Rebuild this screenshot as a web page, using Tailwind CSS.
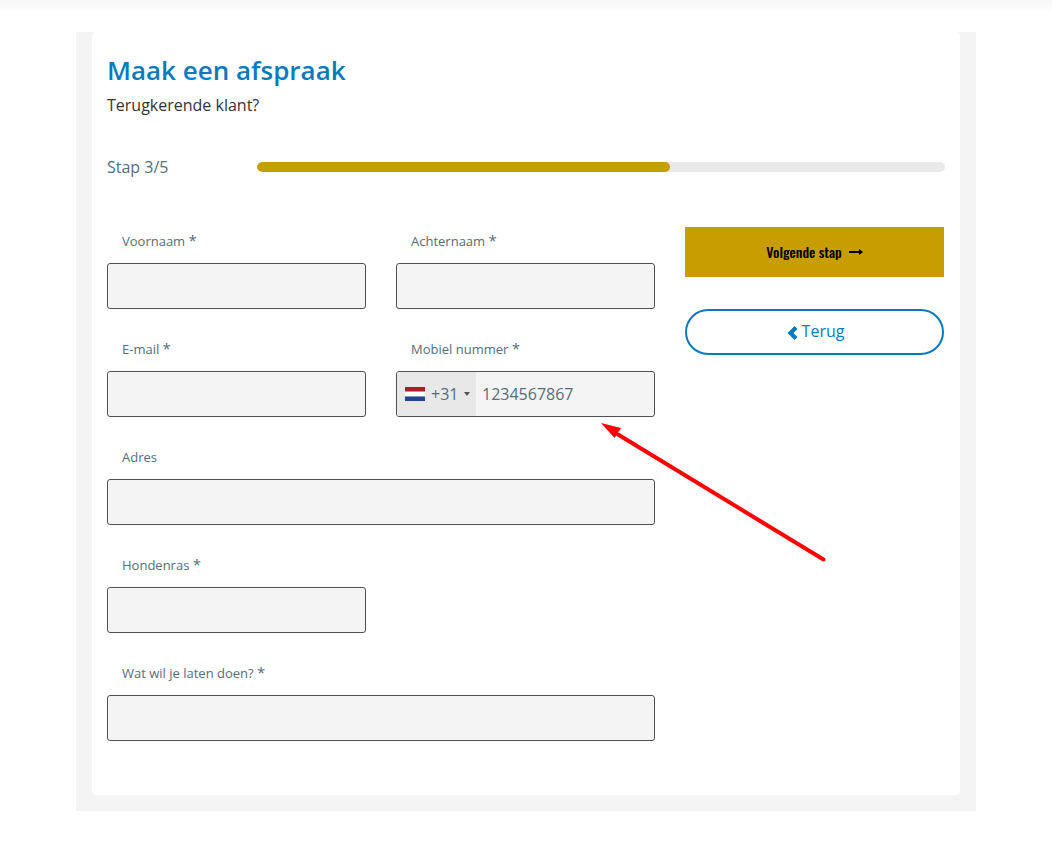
<!DOCTYPE html>
<html lang="nl">
<head>
<meta charset="utf-8">
<meta name="viewport" content="width=device-width, initial-scale=1">
<title>Maak een afspraak</title>
<script src="https://cdn.jsdelivr.net/npm/@tailwindcss/browser@4"></script>
</head>
<body class="bg-white font-['Open_Sans',sans-serif] text-base text-[#546E7A]">
<div class="h-3 bg-linear-to-b from-[#f7f7f7] to-white"></div>
<main class="mx-auto mt-5 max-w-[900px] bg-[#f4f4f4] px-4 pb-4">
  <form class="relative rounded bg-white px-[15px] pt-5 pb-[54px]">
    <h1 class="text-[26px] leading-9 font-semibold text-[#0a7abf]">Maak een afspraak</h1>
    <p class="mt-[5px] leading-6 text-[#333333]">Terugkerende klant?</p>

    <div class="mt-[38px] flex items-center">
      <span class="w-[150px] shrink-0 leading-6" id="step">Stap 3/5</span>
      <div class="h-[10px] grow overflow-hidden rounded-full bg-[#e9e9e9]" role="progressbar" aria-labelledby="step" aria-valuemin="0" aria-valuemax="5" aria-valuenow="3">
        <div class="h-full rounded-full bg-[#c89d00]" style="width:60%"></div>
      </div>
    </div>

    <div class="mt-12 mr-px grid grid-cols-3 gap-x-[30px]">
      <div class="col-span-2 grid grid-cols-2 gap-x-[30px] gap-y-[26px]">
        <div>
          <label for="voornaam" class="block h-7 pl-[15px] text-[13px] leading-7">Voornaam <span class="text-[15px] leading-none">*</span></label>
          <input id="voornaam" type="text" class="mt-2 block h-[46px] w-full rounded-[3px] border border-[#505050] bg-[#f4f4f4] px-3">
        </div>
        <div>
          <label for="achternaam" class="block h-7 pl-[15px] text-[13px] leading-7">Achternaam <span class="text-[15px] leading-none">*</span></label>
          <input id="achternaam" type="text" class="mt-2 block h-[46px] w-full rounded-[3px] border border-[#505050] bg-[#f4f4f4] px-3">
        </div>
        <div>
          <label for="email" class="block h-7 pl-[15px] text-[13px] leading-7">E-mail <span class="text-[15px] leading-none">*</span></label>
          <input id="email" type="email" class="mt-2 block h-[46px] w-full rounded-[3px] border border-[#505050] bg-[#f4f4f4] px-3">
        </div>
        <div>
          <label for="mobiel" class="block h-7 pl-[15px] text-[13px] leading-7">Mobiel nummer <span class="text-[15px] leading-none">*</span></label>
          <div class="mt-2 flex h-[46px] overflow-hidden rounded-[3px] border border-[#505050] bg-[#f4f4f4]">
            <button type="button" aria-label="Landcode +31" class="flex w-[79px] shrink-0 items-center bg-[#e8e8e8] pl-2">
              <svg class="h-[14px] w-5" viewBox="0 0 20 14" shape-rendering="crispEdges"><path fill="#fff" d="M0 0h20v14H0z"/><path fill="#ae1c28" d="M0 0h20v4H0z"/><path fill="#d88990" d="M0 4h20v1H0z"/><path fill="#8798c0" d="M0 9h20v1H0z"/><path fill="#21468b" d="M0 10h20v4H0z"/></svg>
              <span class="ml-[6px]">+31</span>
              <svg class="ml-[6px] h-1 w-[6px]" viewBox="0 0 6 4"><path fill="#555" d="M0 0h6L3 4z"/></svg>
            </button>
            <input id="mobiel" type="tel" value="1234567867" class="min-w-0 grow bg-transparent pl-[6px]">
          </div>
        </div>
        <div class="col-span-2">
          <label for="adres" class="block h-7 pl-[15px] text-[13px] leading-7">Adres</label>
          <input id="adres" type="text" class="mt-2 block h-[46px] w-full rounded-[3px] border border-[#505050] bg-[#f4f4f4] px-3">
        </div>
        <div>
          <label for="hondenras" class="block h-7 pl-[15px] text-[13px] leading-7">Hondenras <span class="text-[15px] leading-none">*</span></label>
          <input id="hondenras" type="text" class="mt-2 block h-[46px] w-full rounded-[3px] border border-[#505050] bg-[#f4f4f4] px-3">
        </div>
        <div class="col-span-2">
          <label for="wensen" class="block h-7 pl-[15px] text-[13px] leading-7">Wat wil je laten doen? <span class="text-[15px] leading-none">*</span></label>
          <input id="wensen" type="text" class="mt-2 block h-[46px] w-full rounded-[3px] border border-[#505050] bg-[#f4f4f4] px-3">
        </div>
      </div>

      <div class="flex flex-col gap-8">
        <button type="submit" class="flex h-[50px] items-center justify-center gap-[7px] bg-[#c89d00] font-['Oswald','Liberation_Sans_Narrow','Roboto_Condensed',sans-serif] text-sm font-medium text-black">Volgende stap
          <svg class="h-[6px] w-[14px]" viewBox="0 0 14 6"><path d="M0 2h10V.6Q10 0 10.500 .3L13.800 2.700Q14 3 13.800 3.300L10.500 5.700Q10 6 10 5.400V4H0z"/></svg>
        </button>
        <button type="button" class="flex h-[46px] items-center justify-center gap-1 rounded-full border-2 border-[#0a7abf] pb-[2px] pl-[2px] text-[#0a7abf]">
          <svg class="mt-1 h-[14px] w-[11px]" viewBox="0 0 11 14"><path fill="currentColor" d="M7.500 0 10.500 3 6.500 7 10.500 11 7.500 14 .5 7z"/></svg>
          Terug</button>
      </div>
    </div>

    <!-- pointer to the phone number field -->
    <svg class="pointer-events-none absolute top-[390px] left-[508px] h-[142px] w-[228px]" viewBox="0 0 228 142" aria-hidden="true">
      <path d="M18 12.500 223.500 137.500" stroke="#f00" stroke-width="4" stroke-linecap="round"/>
      <path fill="#f00" d="M1 1 21 6 14.500 16z"/>
    </svg>
  </form>
</main>
</body>
</html>
